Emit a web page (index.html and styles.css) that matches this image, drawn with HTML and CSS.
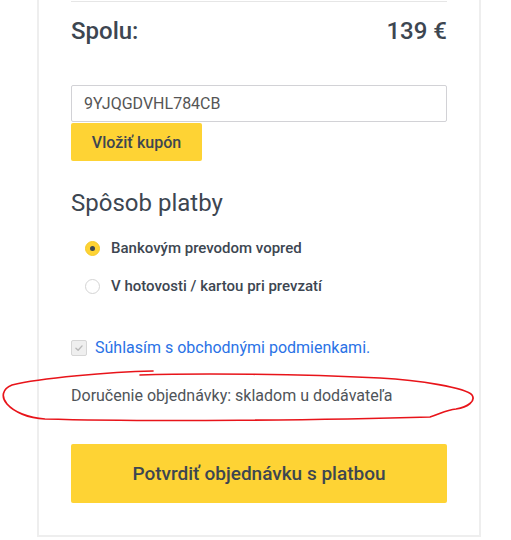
FILE: index.html
```html
<!DOCTYPE html>
<html lang="sk">
<head>
<meta charset="utf-8">
<title>Objednávka</title>
<link rel="stylesheet" href="styles.css">
</head>
<body>
<div class="card">
  <div class="total">
    <span>Spolu:</span>
    <span>139 €</span>
  </div>
  <div class="coupon">
    <input class="coupon-input" type="text" value="9YJQGDVHL784CB">
    <button class="btn btn-coupon" type="button">Vložiť kupón</button>
  </div>
  <h3 class="heading">Spôsob platby</h3>
  <div class="options">
    <label class="option"><span class="radio radio-on"></span><span>Bankovým prevodom vopred</span></label>
    <label class="option"><span class="radio"></span><span>V hotovosti / kartou pri prevzatí</span></label>
  </div>
  <div class="terms">
    <span class="checkbox"><svg width="16" height="16" viewBox="0 0 16 16"><path d="M4.5 8.2 L7 10.6 L11.5 5.6" fill="none" stroke="#b9b9b9" stroke-width="1.6" stroke-linecap="round" stroke-linejoin="round"/></svg></span>
    <a class="terms-link" href="#">Súhlasím s obchodnými podmienkami.</a>
  </div>
  <p class="delivery">Doručenie objednávky: skladom u dodávateľa</p>
  <button class="btn btn-confirm" type="button">Potvrdiť objednávku s platbou</button>
</div>
<svg class="annotation" width="511" height="540" viewBox="0 0 511 540">
  <path d="M153,371 C110,372 40,378 12,385 C2,389 1,397 7,404 C14,412 28,418 45,419 C150,422 330,420 430,417 C440,414 446,410 456,409 C468,407 476,401 472,395 C466,388 420,380 380,378 C300,374 200,373 140,375" fill="none" stroke="#e8141a" stroke-width="1.7" stroke-linecap="round"/>
</svg>
</body>
</html>
```
FILE: styles.css
```css
* { box-sizing: border-box; }
html, body { margin: 0; padding: 0; background: #fff; }
body {
  font-family: Roboto, "Liberation Sans", sans-serif;
  color: #3d4651;
  width: 511px;
  height: 540px;
  overflow: hidden;
  position: relative;
}
.card {
  margin-left: 37px;
  width: 444px;
  border: 2px solid #eeeeee;
  border-top: none;
  padding: 1px 32px 32px;
  display: flex;
  flex-direction: column;
}
.total {
  border-top: 1px solid #e6e6e6;
  padding-top: 15px;
  display: flex;
  justify-content: space-between;
  font-size: 24px;
  font-weight: 500;
  line-height: 28px;
}
.coupon {
  margin-top: 40px;
  display: flex;
  flex-direction: column;
  align-items: flex-start;
}
.coupon-input {
  width: 100%;
  height: 37px;
  border: 1px solid #d2d2d6;
  border-radius: 2px;
  padding: 0 12px;
  font-family: Roboto, "Liberation Sans", sans-serif;
  font-size: 16px;
  color: #555;
  margin: 0 0 1px;
  outline: none;
}
.btn {
  background: #fed334;
  border: none;
  border-radius: 2px;
  font-family: Roboto, "Liberation Sans", sans-serif;
  font-weight: 500;
  color: #3d4651;
  cursor: pointer;
}
.btn-coupon {
  width: 131px;
  height: 38px;
  font-size: 16px;
  padding: 0;
}
.heading {
  margin: 28px 0 0;
  font-size: 24px;
  font-weight: 400;
  line-height: 28px;
}
.options {
  margin-top: 20px;
  display: flex;
  flex-direction: column;
  gap: 16px;
  padding-left: 14px;
}
.option {
  display: flex;
  align-items: center;
  gap: 11px;
  font-size: 15px;
  font-weight: 500;
  line-height: 22px;
}
.radio {
  width: 15px;
  height: 15px;
  border-radius: 50%;
  border: 1px solid #d4d4d4;
  background: #fff;
  display: flex;
  align-items: center;
  justify-content: center;
}
.radio-on {
  background: #fed334;
  border-color: #f5ca2a;
}
.radio-on::after {
  content: "";
  width: 5px;
  height: 5px;
  border-radius: 50%;
  background: #3d4651;
}
.terms {
  margin-top: 39px;
  display: flex;
  align-items: center;
  gap: 8px;
  line-height: 24px;
  font-size: 16px;
}
.checkbox {
  width: 16px;
  height: 16px;
  border: 1px solid #d6d6d6;
  border-radius: 2px;
  background: #efefef;
  display: flex;
  align-items: center;
  justify-content: center;
}
.checkbox svg { display: block; }
.terms-link {
  color: #2a72e6;
  text-decoration: none;
}
.delivery {
  margin: 24px 0 0;
  font-size: 16px;
  line-height: 24px;
  color: #4f5459;
}
.btn-confirm {
  margin-top: 36px;
  width: 100%;
  height: 59px;
  font-size: 19px;
}
.annotation {
  position: absolute;
  left: 0;
  top: 0;
  pointer-events: none;
}
```
